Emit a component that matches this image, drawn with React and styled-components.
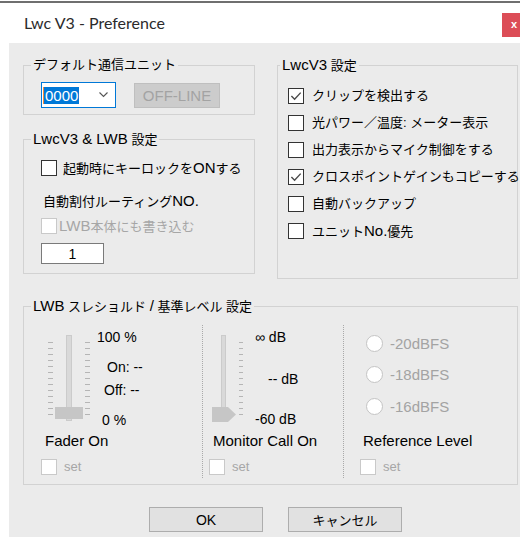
import React from "react";
import styled, { createGlobalStyle } from "styled-components";

const GlobalStyle = createGlobalStyle`
  *, *::before, *::after { box-sizing: border-box; }
  html, body { margin: 0; padding: 0; background: #ffffff; }
  body {
    font-family: "Liberation Sans", "Noto Sans CJK JP", sans-serif;
    font-size: 13px;
    line-height: 16px;
    color: #000000;
  }
`;

const Window = styled.div`
  width: 520px;
  height: 537px;
  display: flex;
  flex-direction: column;
  background: #ffffff;
  overflow: hidden;
`;

const TopEdge = styled.div`
  flex: none;
  height: 2px;
  margin-top: 1px;
  background: #6f6f6f;
`;

const TitleBar = styled.header`
  flex: none;
  height: 40px;
  display: flex;
  align-items: flex-start;
  justify-content: space-between;
  padding-left: 24px;
`;

const Title = styled.h1`
  margin: 10px 0 0;
  font-family: Lato, "Noto Sans", sans-serif;
  font-weight: 400;
  font-size: 16px;
  line-height: 20px;
  color: #2b2b2b;
`;

const CloseButton = styled.button`
  margin: 10px -6px 0 0;
  width: 24px;
  height: 24px;
  padding: 0 0 2px;
  border: none;
  background: #dc4d57;
  color: #ffffff;
  font-family: "Liberation Sans", sans-serif;
  font-weight: 700;
  font-size: 11px;
  line-height: 22px;
`;

const Body = styled.main`
  flex: 1;
  margin-left: 9px;
  background: #ebebeb;
  padding: 14px 0 0 14px;
  display: flex;
  flex-direction: column;
`;

const TopRow = styled.div`
  display: grid;
  grid-template-columns: 232px 241px;
  column-gap: 22px;
  align-items: start;
`;

const Column = styled.div`
  display: flex;
  flex-direction: column;
  gap: ${({ $gap }) => $gap ?? 0}px;
`;

/* the legend sits inside the padding box, so its offset is measured
   back from the content edge with a negative margin */
const Group = styled.fieldset`
  margin: ${({ $top }) => $top ?? 0}px 0 0;
  min-width: 0;
  width: ${({ $width }) => ($width ? `${$width}px` : "auto")};
  border: 1px solid #d2d2d2;
  padding: ${({ $pad }) => $pad};
`;

const Legend = styled.legend`
  margin-left: ${({ $indent }) => $indent ?? 7}px;
  padding: 0 2px;
  font-size: 13px;
  line-height: 16px;
  white-space: nowrap;
`;

/* Latin runs inside Japanese labels are set a size larger */
const En = styled.span`
  font-size: 15px;
`;

const Row = styled.div`
  display: flex;
  align-items: center;
  gap: ${({ $gap }) => $gap ?? 0}px;
`;

const Combo = styled.div`
  width: 75px;
  height: 26px;
  border: 1px solid #0078d7;
  background: #ffffff;
  display: flex;
  align-items: center;
  justify-content: space-between;
  padding: 0 7px 0 1px;
`;

const Selected = styled.span`
  background: #0078d7;
  color: #ffffff;
  font-size: 15px;
  line-height: 17px;
  padding: 0 1px;
  border-left: 1px solid #f0883a;
`;

const DisabledButton = styled.button`
  width: 86px;
  height: 25px;
  padding: 0;
  background: #cccccc;
  border: 1px solid #bfbfbf;
  color: #a3a3a3;
  font-family: "Liberation Sans", sans-serif;
  font-size: 15px;
`;

const CheckRow = styled.label`
  display: flex;
  align-items: center;
  height: 16px;
  gap: ${({ $gap }) => $gap ?? 7}px;
  margin-top: ${({ $top }) => $top ?? 0}px;
  padding-left: ${({ $indent }) => $indent ?? 0}px;
  color: ${({ $disabled }) => ($disabled ? "#a6a6a6" : "#000000")};
  white-space: nowrap;
`;

const CheckBox = styled.span`
  flex: none;
  width: 16px;
  height: 16px;
  display: flex;
  align-items: center;
  justify-content: center;
  background: #ffffff;
  border: 1px solid ${({ $disabled }) => ($disabled ? "#c9c9c9" : "#333333")};
`;

const Text = styled.div`
  height: 16px;
  margin-top: ${({ $top }) => $top ?? 0}px;
  padding-left: ${({ $indent }) => $indent ?? 0}px;
  white-space: nowrap;
`;

const NumberBox = styled.div`
  width: 63px;
  height: 21px;
  margin-top: 9px;
  border: 1px solid #7a7a7a;
  background: #ffffff;
  display: flex;
  align-items: center;
  justify-content: center;
  font-size: 14px;
`;

const Sections = styled.div`
  display: flex;
  height: 153px;
`;

const Section = styled.div`
  flex: ${({ $width }) => ($width ? `0 0 ${$width}px` : "1")};
  display: flex;
  flex-direction: column;
  border-left: ${({ $divided }) => ($divided ? "1px dotted #a9a9a9" : "none")};
  border-right: ${({ $divided }) => ($divided ? "1px dotted #a9a9a9" : "none")};
`;

const ControlArea = styled.div`
  height: 108px;
  display: flex;
  padding-top: ${({ $top }) => $top}px;
  padding-left: ${({ $indent }) => $indent}px;
`;

const FaderArt = styled.svg`
  flex: none;
  margin-top: 6px;
`;

const Scale = styled.div`
  display: flex;
  flex-direction: column;
  margin-left: ${({ $gap }) => $gap}px;
`;

const ScaleLabel = styled.div`
  height: 16px;
  margin-top: ${({ $top }) => $top ?? 0}px;
  padding-left: ${({ $indent }) => $indent ?? 0}px;
  font-size: 14px;
  white-space: nowrap;
`;

const Caption = styled.div`
  height: 16px;
  padding-left: ${({ $indent }) => $indent}px;
  font-size: 15px;
  white-space: nowrap;
`;

const RadioList = styled.div`
  display: flex;
  flex-direction: column;
`;

const RadioRow = styled.label`
  display: flex;
  align-items: center;
  gap: 7px;
  height: 17px;
  margin-top: ${({ $top }) => $top ?? 0}px;
  color: #a3a3a3;
  font-size: 15px;
`;

const RadioDot = styled.span`
  flex: none;
  width: 17px;
  height: 17px;
  border-radius: 50%;
  border: 1px solid #c4c4c4;
  background: #ffffff;
`;

const Footer = styled.div`
  display: flex;
  gap: 25px;
  margin-top: 22px;
  padding-left: 126px;
`;

const PushButton = styled.button`
  width: 114px;
  height: 25px;
  padding: 0;
  background: #e1e1e1;
  border: 1px solid #adadad;
  color: #000000;
  font-family: "Liberation Sans", "Noto Sans CJK JP", sans-serif;
  font-size: ${({ $size }) => $size ?? 13}px;
`;

function Tick() {
  return (
    <svg width="14" height="14" viewBox="0 0 14 14">
      <path d="M2.4 7.1 L5.6 10.3 L11.7 3.6" fill="none" stroke="#4a4a4a" strokeWidth="1.4" />
    </svg>
  );
}

function Option({ checked, disabled, gap, top, indent, children }) {
  return (
    <CheckRow $disabled={disabled} $gap={gap} $top={top} $indent={indent}>
      <CheckBox $disabled={disabled}>{checked && <Tick />}</CheckBox>
      <span>{children}</span>
    </CheckRow>
  );
}

function Chevron() {
  return (
    <svg width="9" height="6" viewBox="0 0 9 6">
      <polyline points="0.5,0.5 4.5,4.5 8.5,0.5" fill="none" stroke="#555555" strokeWidth="1.1" />
    </svg>
  );
}

const tickRows = Array.from({ length: 13 }, (_, i) => 7.5 + i * 6);

function ThresholdFader() {
  return (
    <FaderArt width="43" height="86" viewBox="0 0 43 86">
      <rect x="18.5" y="0.5" width="5" height="85" fill="#d9d9d9" stroke="#cbcbcb" />
      {tickRows.map((y) => (
        <g key={y} stroke="#b5b5b5">
          <line x1="0" x2="5" y1={y} y2={y} />
          <line x1="37" x2="42" y1={y} y2={y} />
        </g>
      ))}
      <rect x="7" y="72" width="28" height="12" fill="#c6c6c6" />
    </FaderArt>
  );
}

function MonitorFader() {
  return (
    <FaderArt width="32" height="88" viewBox="0 0 32 88">
      <rect x="9.5" y="0.5" width="4" height="79" fill="#d9d9d9" stroke="#cbcbcb" />
      {tickRows.map((y) => (
        <line key={y} x1="27" x2="31" y1={y} y2={y} stroke="#b5b5b5" />
      ))}
      <polygon points="0,72 16,72 24,79.5 16,87 0,87" fill="#c6c6c6" />
    </FaderArt>
  );
}

export default function App() {
  return (
    <>
      <GlobalStyle />
      <Window>
        <TopEdge />
        <TitleBar>
          <Title>Lwc V3 - Preference</Title>
          <CloseButton>x</CloseButton>
        </TitleBar>
        <Body>
          <TopRow>
            <Column $gap={16}>
              <Group $pad="9px 6px 6px 17px">
                <Legend $indent={-10}>デフォルト通信ユニット</Legend>
                <Row $gap={18}>
                  <Combo>
                    <Selected>0000</Selected>
                    <Chevron />
                  </Combo>
                  <DisabledButton disabled>OFF-LINE</DisabledButton>
                </Row>
              </Group>
              <Group $pad="12px 6px 9px 17px">
                <Legend $indent={-10}>
                  <En>LwcV3 &amp; LWB</En> 設定
                </Legend>
                <Option gap={6}>
                  起動時にキーロックを<En>ON</En>する
                </Option>
                <Text $top={17} $indent={2}>
                  自動割付ルーティング<En>NO.</En>
                </Text>
                <Option disabled gap={2} top={9}>
                  <En>LWB</En>本体にも書き込む
                </Option>
                <NumberBox>1</NumberBox>
              </Group>
            </Column>
            <Group $pad="14px 6px 39px 10px">
              <Legend $indent={-8}>
                <En>LwcV3</En> 設定
              </Legend>
              <Option checked gap={8}>クリップを検出する</Option>
              <Option gap={8} top={11}>光パワー／温度: メーター表示</Option>
              <Option gap={8} top={11}>出力表示からマイク制御をする</Option>
              <Option checked gap={8} top={11}>クロスポイントゲインもコピーする</Option>
              <Option gap={8} top={11}>自動バックアップ</Option>
              <Option gap={8} top={11}>
                ユニット<En>No.</En>優先
              </Option>
            </Group>
          </TopRow>

          <Group $pad="10px 0 6px 0" $top={19} $width={495}>
            <Legend $indent={7}>
              <En>LWB</En> スレショルド <En>/</En> 基準レベル 設定
            </Legend>
            <Sections>
              <Section $width={178}>
                <ControlArea $top={4} $indent={24}>
                  <ThresholdFader />
                  <Scale $gap={6}>
                    <ScaleLabel>100 %</ScaleLabel>
                    <ScaleLabel $top={14} $indent={10}>On: --</ScaleLabel>
                    <ScaleLabel $top={7} $indent={7}>Off: --</ScaleLabel>
                    <ScaleLabel $top={14} $indent={5}>0 %</ScaleLabel>
                  </Scale>
                </ControlArea>
                <Caption $indent={21}>Fader On</Caption>
                <Option disabled top={10} indent={17}>set</Option>
              </Section>
              <Section $width={142} $divided>
                <ControlArea $top={4} $indent={9}>
                  <MonitorFader />
                  <Scale $gap={11}>
                    <ScaleLabel>∞ dB</ScaleLabel>
                    <ScaleLabel $top={26} $indent={13}>-- dB</ScaleLabel>
                    <ScaleLabel $top={24}>-60 dB</ScaleLabel>
                  </Scale>
                </ControlArea>
                <Caption $indent={10}>Monitor Call On</Caption>
                <Option disabled top={10} indent={6}>set</Option>
              </Section>
              <Section>
                <ControlArea $top={10} $indent={22}>
                  <RadioList>
                    <RadioRow>
                      <RadioDot />
                      -20dBFS
                    </RadioRow>
                    <RadioRow $top={14}>
                      <RadioDot />
                      -18dBFS
                    </RadioRow>
                    <RadioRow $top={15}>
                      <RadioDot />
                      -16dBFS
                    </RadioRow>
                  </RadioList>
                </ControlArea>
                <Caption $indent={19}>Reference Level</Caption>
                <Option disabled top={10} indent={16}>set</Option>
              </Section>
            </Sections>
          </Group>

          <Footer>
            <PushButton $size={14}>OK</PushButton>
            <PushButton>キャンセル</PushButton>
          </Footer>
        </Body>
      </Window>
    </>
  );
}
